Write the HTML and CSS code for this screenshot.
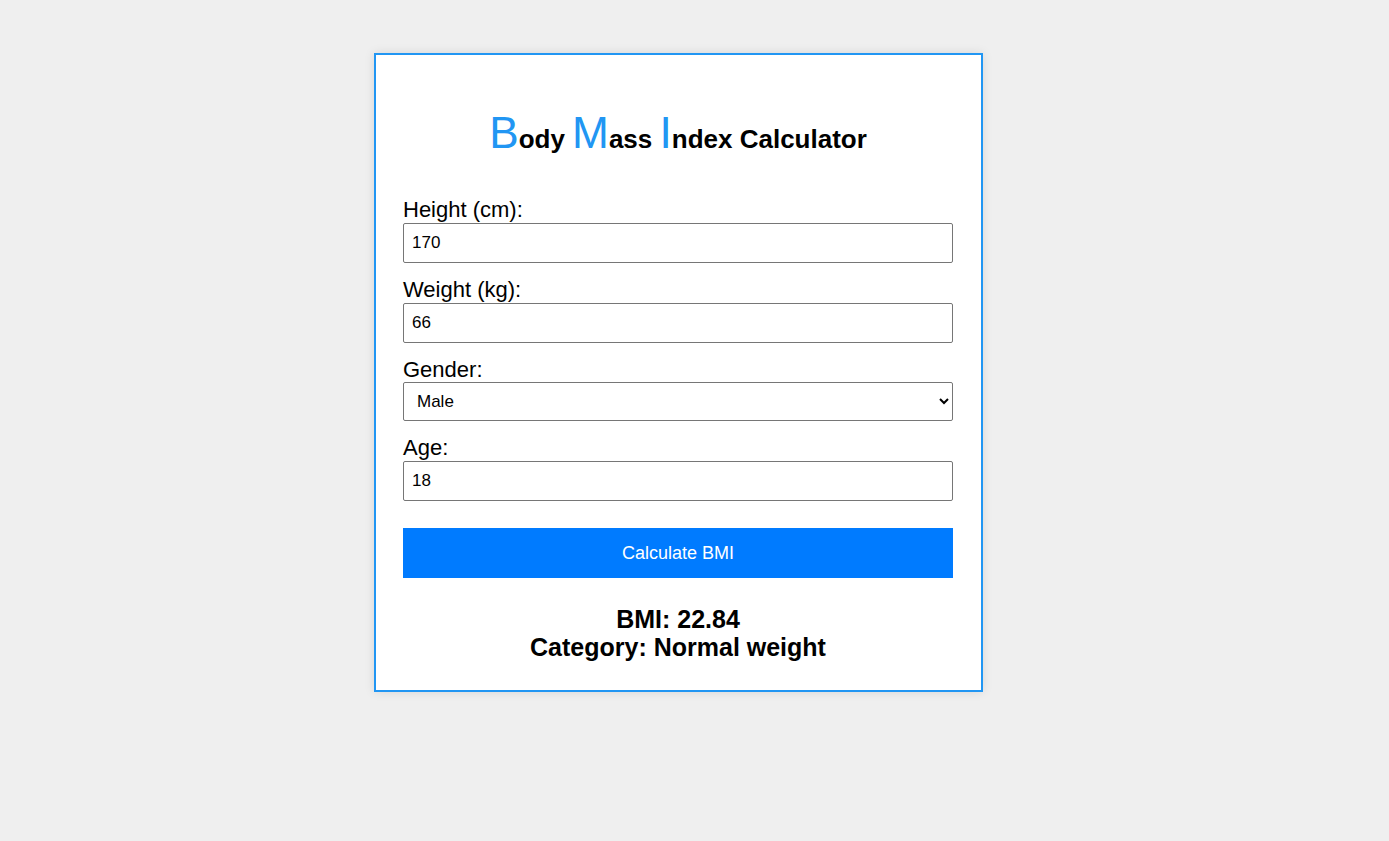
FILE: index.html
```html
<!DOCTYPE html>
<html lang="en">
<head>
<meta charset="UTF-8">
<title>BMI Calculator</title>
<link rel="stylesheet" href="styles.css">
</head>
<body>
<div class="page">
  <div class="container">
    <h1 class="title"><span class="cap">B</span>ody <span class="cap">M</span>ass <span class="cap">I</span>ndex Calculator</h1>
    <form class="form">
      <label class="label" for="height">Height (cm):</label>
      <input class="field" type="number" id="height" value="170">
      <label class="label" for="weight">Weight (kg):</label>
      <input class="field" type="number" id="weight" value="66">
      <label class="label label-select" for="gender">Gender:</label>
      <select class="field select" id="gender">
        <option>Male</option>
        <option>Female</option>
      </select>
      <label class="label" for="age">Age:</label>
      <input class="field" type="number" id="age" value="18">
      <button class="btn" type="button">Calculate BMI</button>
    </form>
    <div class="result">
      <div>BMI: 22.84</div>
      <div>Category: Normal weight</div>
    </div>
  </div>
</div>
</body>
</html>
```
FILE: styles.css
```css
html, body {
  margin: 0;
  padding: 0;
}
body {
  background: #efefef;
  font-family: "Liberation Sans", Arial, sans-serif;
  color: #000;
  min-height: 841px;
}
.page {
  width: 1357px;
  padding-top: 53px;
}
.container {
  box-sizing: border-box;
  width: 609px;
  margin: 0 auto;
  background: #fff;
  border: 2px solid #2196f3;
  padding: 27px 28px 27px 27px;
  box-shadow: 0 0 10px rgba(0, 0, 0, 0.1);
}
.title {
  font-size: 26px;
  font-weight: bold;
  text-align: center;
  margin: 26px 0 40px;
  line-height: normal;
}
.cap {
  font-size: 1.7em;
  font-weight: normal;
  color: #2196f3;
}
.form {
  display: flex;
  flex-direction: column;
  margin: 0;
}
.label {
  display: block;
  font-size: 22px;
  line-height: 23px;
  margin-bottom: 2px;
}
.label-select {
  margin-bottom: 1px;
}
.field {
  box-sizing: border-box;
  width: 100%;
  height: 40px;
  padding: 8px;
  font-family: "Liberation Sans", Arial, sans-serif;
  font-size: 17px;
  border: 1px solid #767676;
  border-radius: 2px;
  margin: 0 0 15px;
  background: #fff;
  color: #000;
}
.field::-webkit-inner-spin-button,
.field::-webkit-outer-spin-button {
  -webkit-appearance: none;
  margin: 0;
}
.select {
  height: 39px;
  padding: 8px 4px 8px 9px;
}
.btn {
  margin-top: 12px;
  height: 50px;
  width: 100%;
  border: none;
  background: #007bff;
  color: #fff;
  font-family: "Liberation Sans", Arial, sans-serif;
  font-size: 18px;
  cursor: pointer;
}
.result {
  margin: 27px 0 2px;
  text-align: center;
  font-size: 25px;
  line-height: 28px;
  font-weight: bold;
}
```
